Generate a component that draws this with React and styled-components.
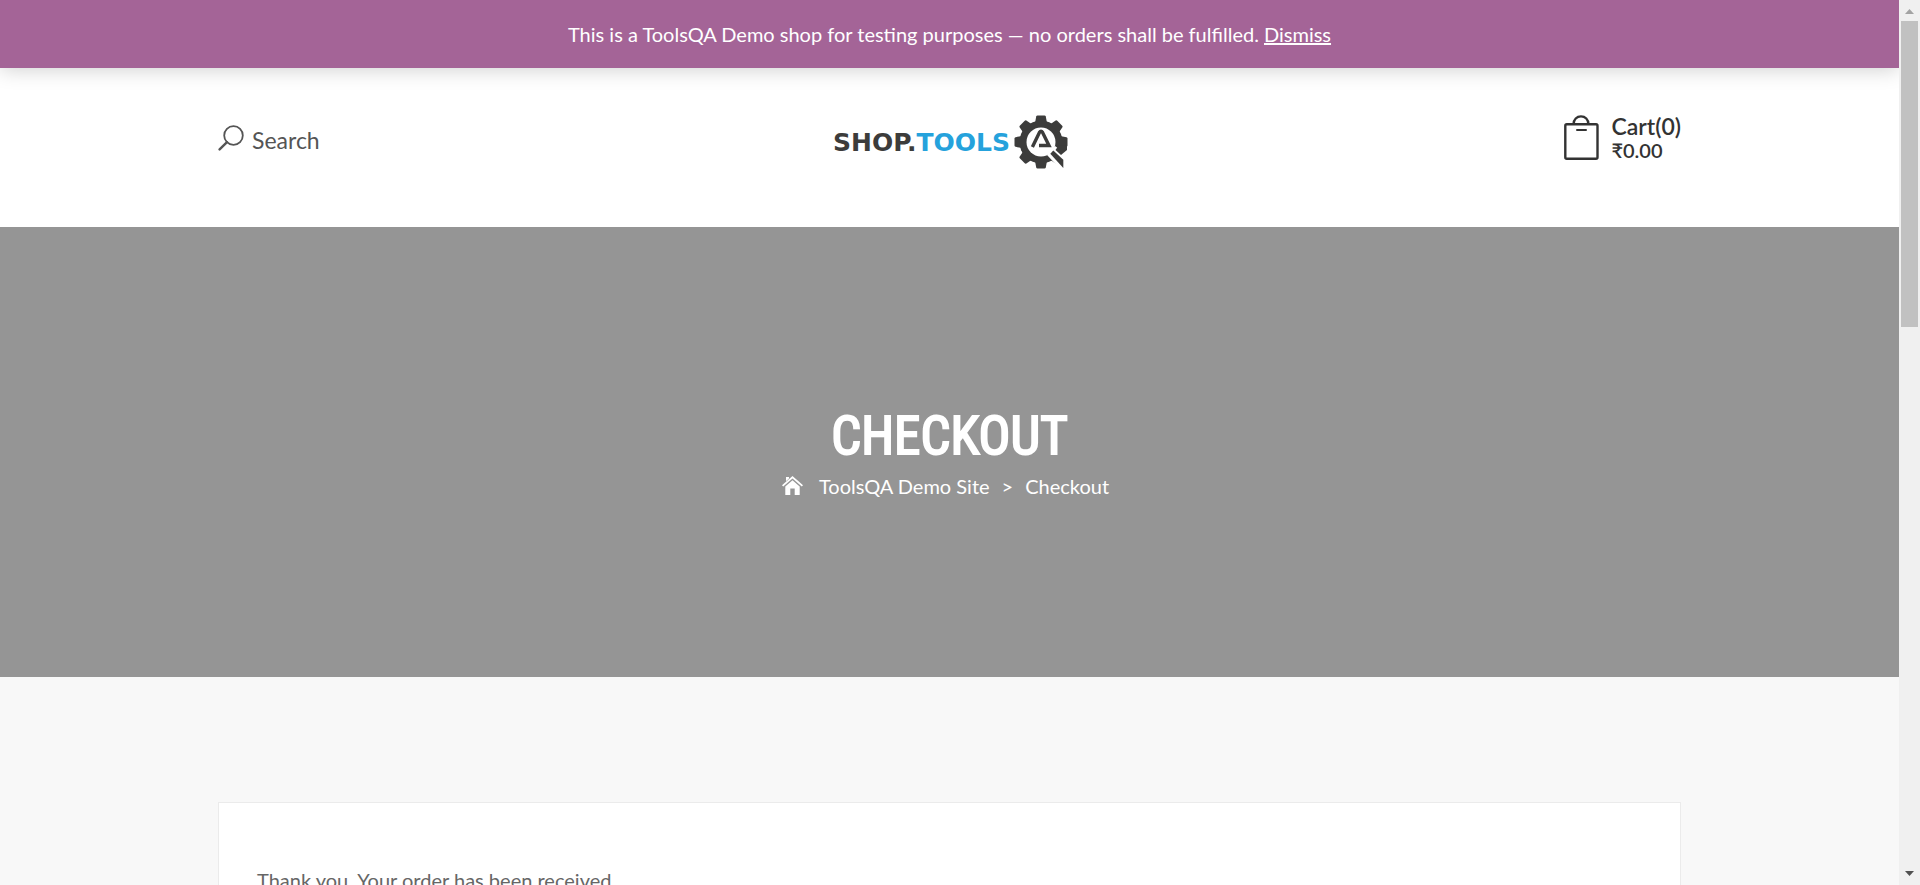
import React, { useState } from "react";
import styled, { createGlobalStyle } from "styled-components";

const GlobalStyle = createGlobalStyle`
  *, *::before, *::after { box-sizing: border-box; }
  body {
    margin: 0;
    background: #f8f8f8;
    color: #666;
    font-family: Lato, "Liberation Sans", sans-serif;
    font-size: 20px;
    line-height: 28px;
  }
  a { color: inherit; text-decoration: none; }
`;

const Window = styled.div`
  display: flex;
  height: 100vh;
  overflow: hidden;
`;

const Page = styled.div`
  flex: 1;
  min-width: 0;
  overflow: hidden;
`;

const StoreNotice = styled.p`
  position: relative;
  margin: 0;
  padding: 20px;
  background: #a46497;
  color: #fff;
  text-align: center;
  box-shadow: 0 1px 20px rgba(0, 0, 0, 0.2);
`;

const DismissLink = styled.a`
  text-decoration: underline;
`;

const Container = styled.div`
  width: calc(100% - 40px);
  max-width: 1463px;
  margin: 0 auto;
`;

const Header = styled.header`
  background: #fff;
  padding: 46px 0 57px;
`;

const HeaderRow = styled(Container)`
  display: grid;
  grid-template-columns: 1fr auto 1fr;
  align-items: start;
`;

const SearchButton = styled.button`
  display: flex;
  align-items: center;
  justify-self: start;
  gap: 8px;
  padding: 10px 0;
  border: 0;
  background: none;
  color: #555;
  font: inherit;
  font-size: 23px;
  cursor: pointer;
`;

const LogoLink = styled.a`
  display: flex;
`;

const CartLink = styled.a`
  display: flex;
  align-items: center;
  justify-self: end;
  gap: 12px;
  color: #333;
  font-weight: 600;
`;

const CartText = styled.span`
  display: flex;
  flex-direction: column;
`;

const CartCount = styled.span`
  font-size: 23px;
  line-height: 24px;
`;

const CartTotal = styled.span`
  font-size: 20px;
  line-height: 24px;
`;

const Hero = styled.section`
  display: flex;
  flex-direction: column;
  align-items: center;
  gap: 4px;
  padding: 177px 20px;
  background: #959595;
  color: #fff;
`;

const PageTitle = styled.h1`
  margin: 0;
  font-family: "Liberation Sans Narrow", "Roboto Condensed", "DejaVu Sans Condensed", sans-serif;
  font-size: 53px;
  font-weight: 400;
  line-height: 64px;
  text-transform: uppercase;
  -webkit-text-stroke: 2px #fff;
`;

const Breadcrumb = styled.nav`
  display: flex;
  align-items: center;
  gap: 12px;
  padding-right: 8px;
`;

const HomeLink = styled.a`
  display: flex;
  align-items: center;
  gap: 16px;
`;

const Content = styled.main`
  padding-top: 125px;
`;

const OrderCard = styled(Container)`
  min-height: 400px;
  padding: 63px 38px;
  border: 1px solid #ebebeb;
  background: #fff;
`;

const OrderMessage = styled.p`
  margin: 0;
`;

const ScrollTrack = styled.div`
  display: flex;
  flex-direction: column;
  align-items: center;
  flex: 0 0 21px;
  background: #f0f0f0;
`;

const ScrollThumb = styled.div`
  width: 17px;
  height: 306px;
  margin-bottom: auto;
  background: #c1c1c1;
`;

const ScrollArrow = styled.svg`
  display: block;
  width: 21px;
  height: 21px;
`;

function SearchIcon() {
  return (
    <svg width="26" height="32" viewBox="0 0 26 32" fill="none" stroke="#555" aria-hidden="true">
      <circle cx="15.500" cy="11.500" r="9.300" strokeWidth="1.800" />
      <path d="M9 18.200 1.600 25.400" strokeWidth="2.400" strokeLinecap="round" />
    </svg>
  );
}

function BagIcon() {
  return (
    <svg width="35" height="46" viewBox="0 0 35 46" fill="none" stroke="#333" strokeWidth="2.400" aria-hidden="true">
      <rect x="1.300" y="9.300" width="32.200" height="34.400" rx="1.500" />
      <path d="M9.600 9c0-4.500 3.200-7.600 7.400-7.600s7.400 3.100 7.400 7.600" />
      <path d="M13 15h9" strokeLinecap="round" strokeWidth="2" />
    </svg>
  );
}

function HomeIcon() {
  return (
    <svg width="21" height="20" viewBox="0 0 21 20" fill="#fff" aria-hidden="true">
      <path d="M10.500 0 0 9.200l1.200 1.400 9.300-8.200 9.300 8.200L21 9.200 16 4.800 13.600 2.700z" />
      <path d="M4 1h3v1.600L4 5.200z" />
      <path d="M10.500 4.300 3.300 10.600V19h5v-6.500h4.400V19h5v-8.400z" />
    </svg>
  );
}

function Logo() {
  const teeth = [0, 45, 90, 135, 180, 225, 270, 315];
  return (
    <svg width="236" height="56" viewBox="0 0 236 56" role="img" aria-label="Shop.ToolsQA">
      <text x="1" y="37" fontFamily="DejaVu Sans, sans-serif" fontWeight="700" fontSize="25" fill="#3c3c3b">
        SHOP.<tspan fill="#25a2dc">TOOLS</tspan>
      </text>
      <g transform="translate(209 28)">
        <g fill="#3c3c3b">
          <circle r="21.500" />
          {teeth.map((angle) => (
            <path key={angle} transform={`rotate(${angle})`} d="M-6-19-4.800-25.500q.3-1 1.300-1h7q1 0 1.300 1L6-19z" />
          ))}
        </g>
        <circle r="14.500" fill="#fff" />
        <path d="M6 13 21 29H27V14L14 4z" fill="#fff" />
        <path d="M20 13 14.500 8 18 3 26 4V8z" fill="#3c3c3b" />
        <path d="M9.300 11.700 12.300 8.400 22.300 17.700V26z" fill="#3c3c3b" />
        <path d="M-8.600 5-1.600-9.500q1.600-2.600 3.200 0L8 3.500H-2" fill="none" stroke="#3c3c3b" strokeWidth="3.400" />
      </g>
    </svg>
  );
}

export default function App() {
  const [noticeOpen, setNoticeOpen] = useState(true);
  const dismiss = (event) => {
    event.preventDefault();
    setNoticeOpen(false);
  };

  return (
    <Window>
      <GlobalStyle />
      <Page>
        {noticeOpen && (
          <StoreNotice>
            This is a ToolsQA Demo shop for testing purposes — no orders shall be fulfilled.{" "}
            <DismissLink href="#" onClick={dismiss}>Dismiss</DismissLink>
          </StoreNotice>
        )}
        <Header>
          <HeaderRow>
            <SearchButton type="button">
              <SearchIcon />
              Search
            </SearchButton>
            <LogoLink href="#"><Logo /></LogoLink>
            <CartLink href="#">
              <BagIcon />
              <CartText>
                <CartCount>Cart(0)</CartCount>
                <CartTotal>₹0.00</CartTotal>
              </CartText>
            </CartLink>
          </HeaderRow>
        </Header>
        <Hero>
          <PageTitle>Checkout</PageTitle>
          <Breadcrumb aria-label="Breadcrumb">
            <HomeLink href="#">
              <HomeIcon />
              ToolsQA Demo Site
            </HomeLink>
            <span>&gt;</span>
            <span>Checkout</span>
          </Breadcrumb>
        </Hero>
        <Content>
          <OrderCard>
            <OrderMessage>Thank you. Your order has been received.</OrderMessage>
          </OrderCard>
        </Content>
      </Page>
      <ScrollTrack aria-hidden="true">
        <ScrollArrow viewBox="0 0 21 21"><path d="M6 14h9l-4.500-5z" fill="#a3a3a3" /></ScrollArrow>
        <ScrollThumb />
        <ScrollArrow viewBox="0 0 21 21"><path d="M6 7h9l-4.500 5z" fill="#505050" /></ScrollArrow>
      </ScrollTrack>
    </Window>
  );
}
